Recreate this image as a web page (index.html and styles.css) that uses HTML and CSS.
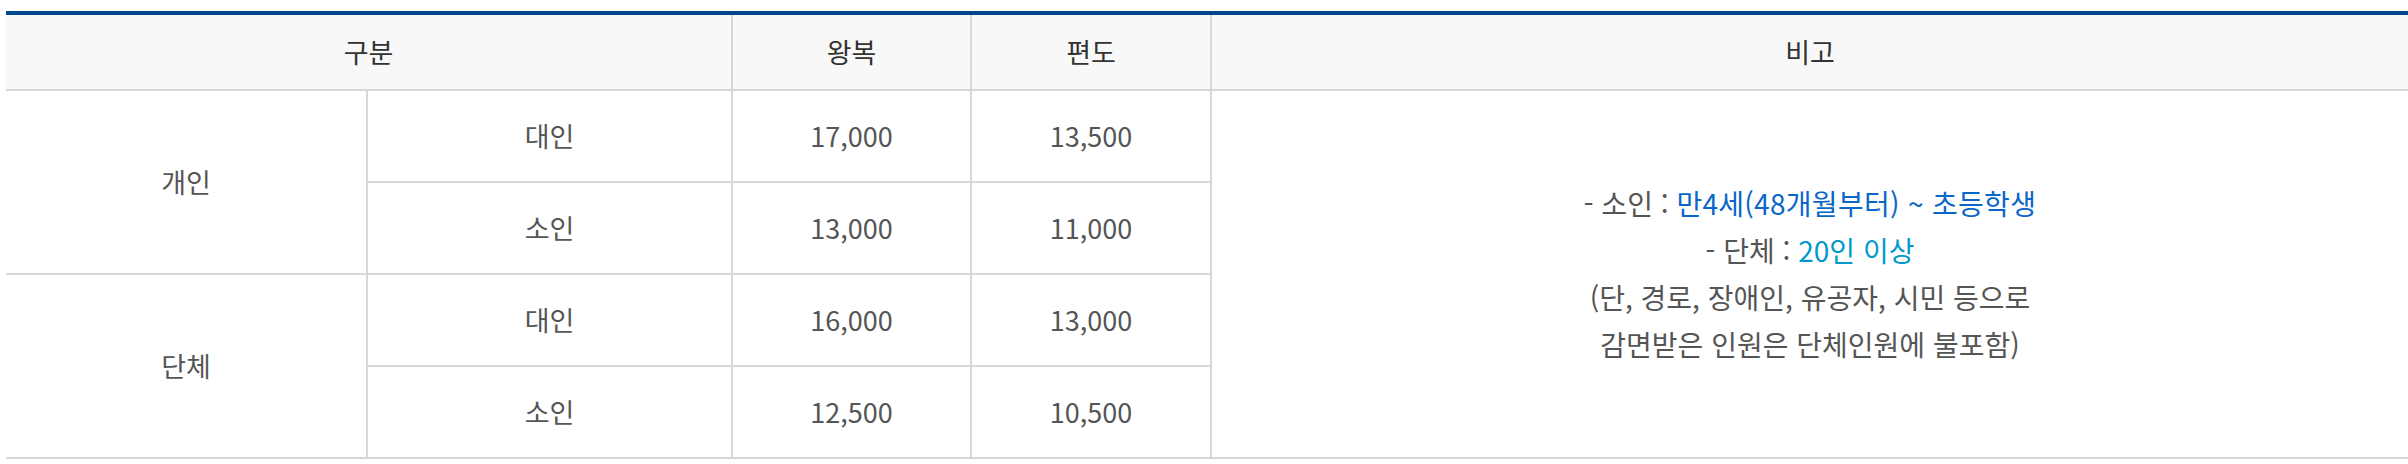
FILE: index.html
```html
<!DOCTYPE html>
<html lang="ko">

<head>
    <meta charset="UTF-8">
    <meta name="viewport" content="width=device-width, initial-scale=1.0">
    <title>요금 안내</title>
    <link rel="stylesheet" href="styles.css">
</head>

<body>
    <div class="tbl-wrap">
        <table class="fare-table">
            <colgroup>
                <col class="c-kind">
                <col class="c-age">
                <col class="c-round">
                <col class="c-one">
                <col>
            </colgroup>
            <thead>
                <tr>
                    <th colspan="2">구분</th>
                    <th>왕복</th>
                    <th>편도</th>
                    <th>비고</th>
                </tr>
            </thead>
            <tbody>
                <tr>
                    <td rowspan="2">개인</td>
                    <td>대인</td>
                    <td>17,000</td>
                    <td>13,500</td>
                    <td rowspan="4" class="note">
                        <p>- 소인 : <span class="blue">만4세(48개월부터) ~ 초등학생</span></p>
                        <p>- 단체 : <span class="sky">20인 이상</span></p>
                        <p>(단, 경로, 장애인, 유공자, 시민 등으로</p>
                        <p>감면받은 인원은 단체인원에 불포함)</p>
                    </td>
                </tr>
                <tr>
                    <td>소인</td>
                    <td>13,000</td>
                    <td>11,000</td>
                </tr>
                <tr>
                    <td rowspan="2">단체</td>
                    <td>대인</td>
                    <td>16,000</td>
                    <td>13,000</td>
                </tr>
                <tr>
                    <td>소인</td>
                    <td>12,500</td>
                    <td>10,500</td>
                </tr>
            </tbody>
        </table>
    </div>
</body>

</html>
```

FILE: styles.css
```css
body {
    margin: 0;
    font-family: "Noto Sans CJK KR", "Noto Sans", sans-serif;
    background: #fff;
}

.tbl-wrap {
    margin: 11px 0 0 6px;
    border-top: 4px solid #00468c;
}

.fare-table {
    width: 100%;
    border-collapse: collapse;
    table-layout: fixed;
    font-size: 27px;
}

.c-kind {
    width: 361px;
}

.c-age {
    width: 365px;
}

.c-round {
    width: 239px;
}

.c-one {
    width: 240px;
}

.fare-table th,
.fare-table td {
    border: 2px solid #d7d7d7;
    text-align: center;
    padding: 0;
    line-height: 1.4;
}

.fare-table tr > :first-child {
    border-left: none;
}

.fare-table tr > :last-child {
    border-right: none;
}

.fare-table th {
    height: 74px;
    border-top: none;
    background-color: #f8f8f8;
    color: #333;
    font-weight: normal;
}

.fare-table td {
    height: 90px;
    color: #555;
}

.fare-table td[rowspan="2"] {
    border-left: none;
}

.note p {
    margin: 0;
    font-size: 28px;
    line-height: 47px;
}

.blue {
    color: #0a66c8;
    letter-spacing: 0.3px;
}

.sky {
    color: #0099cc;
}
```
